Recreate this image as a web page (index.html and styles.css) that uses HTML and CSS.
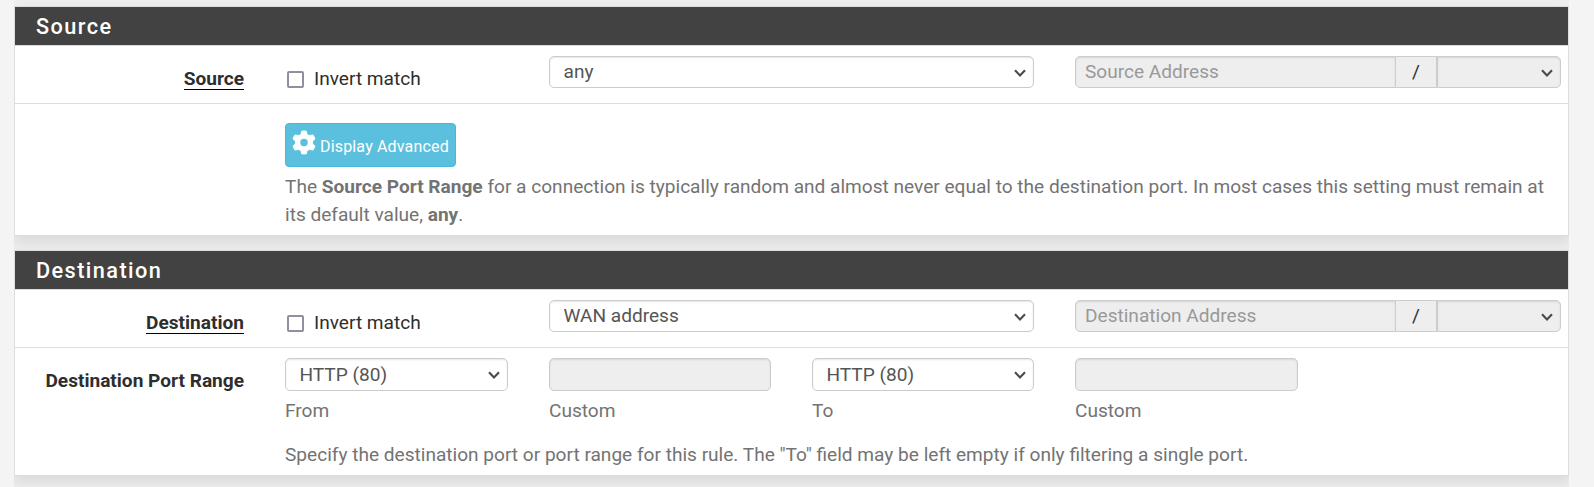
FILE: index.html
```html
<!DOCTYPE html>
<html lang="en">
<head>
<meta charset="utf-8">
<title>Firewall rule</title>
<link rel="stylesheet" href="styles.css">
</head>
<body>
<svg class="defs" aria-hidden="true">
  <symbol id="chevron" viewBox="0 0 12 8"><path d="M1 1.2 L6 6.4 L11 1.2" fill="none" stroke="#4a4a4a" stroke-width="2.1"/></symbol>
</svg>
<main class="container">
  <section class="panel">
    <h2 class="panel-heading">Source</h2>
    <div class="row row-address">
      <div class="label"><span class="underlined">Source</span></div>
      <label class="invert"><input type="checkbox" class="checkbox">Invert match</label>
      <div class="select wide"><span>any</span><svg class="arrow"><use href="#chevron"/></svg></div>
      <div class="group">
        <input class="control" type="text" placeholder="Source Address" disabled>
        <span class="addon">/</span>
        <div class="select disabled"><svg class="arrow"><use href="#chevron"/></svg></div>
      </div>
    </div>
    <div class="row row-advanced">
      <div class="full">
        <button class="button" type="button"><svg class="gear" viewBox="0 0 512 512"><path fill="#fff" d="M495.9 166.6c3.2 8.7 .5 18.4-6.4 24.6l-43.3 39.4c1.1 8.3 1.7 16.8 1.7 25.4s-.6 17.1-1.7 25.4l43.3 39.4c6.9 6.2 9.6 15.9 6.4 24.6c-4.4 11.9-9.7 23.3-15.8 34.3l-4.7 8.1c-6.6 11-14 21.4-22.1 31.2c-5.9 7.2-15.7 9.6-24.5 6.8l-55.7-17.7c-13.4 10.3-28.2 18.9-44 25.4l-12.5 57.1c-2 9.1-9 16.3-18.2 17.8c-13.8 2.3-28 3.5-42.5 3.5s-28.7-1.2-42.5-3.5c-9.2-1.5-16.2-8.7-18.2-17.8l-12.5-57.1c-15.8-6.5-30.6-15.1-44-25.4L83.1 425.9c-8.8 2.8-18.6 .3-24.5-6.8c-8.1-9.8-15.5-20.2-22.1-31.2l-4.7-8.1c-6.1-11-11.4-22.4-15.8-34.3c-3.2-8.7-.5-18.4 6.4-24.6l43.3-39.4C64.6 273.1 64 264.6 64 256s.6-17.1 1.7-25.4L22.4 191.2c-6.9-6.2-9.6-15.9-6.4-24.6c4.4-11.9 9.7-23.3 15.8-34.3l4.7-8.1c6.6-11 14-21.4 22.1-31.2c5.9-7.2 15.7-9.6 24.5-6.8l55.7 17.7c13.4-10.3 28.2-18.9 44-25.4l12.5-57.1c2-9.1 9-16.3 18.2-17.8C227.3 1.2 241.5 0 256 0s28.7 1.2 42.5 3.5c9.2 1.5 16.2 8.7 18.2 17.8l12.5 57.1c15.8 6.5 30.6 15.1 44 25.4l55.7-17.7c8.8-2.8 18.6-.3 24.5 6.8c8.1 9.8 15.5 20.2 22.1 31.2l4.7 8.1c6.1 11 11.4 22.4 15.8 34.3zM256 336a80 80 0 1 0 0-160 80 80 0 1 0 0 160z"/></svg><span class="button-text">Display Advanced</span></button>
        <p class="help">The <b>Source Port Range</b> for a connection is typically random and almost never equal to the destination port. In most cases this setting must remain at its default value, <b>any</b>.</p>
      </div>
    </div>
  </section>
  <section class="panel">
    <h2 class="panel-heading">Destination</h2>
    <div class="row row-address">
      <div class="label"><span class="underlined">Destination</span></div>
      <label class="invert"><input type="checkbox" class="checkbox">Invert match</label>
      <div class="select wide"><span>WAN address</span><svg class="arrow"><use href="#chevron"/></svg></div>
      <div class="group">
        <input class="control" type="text" placeholder="Destination Address" disabled>
        <span class="addon">/</span>
        <div class="select disabled"><svg class="arrow"><use href="#chevron"/></svg></div>
      </div>
    </div>
    <div class="row row-ports">
      <div class="label">Destination Port Range</div>
      <div class="port"><div class="select"><span>HTTP (80)</span><svg class="arrow"><use href="#chevron"/></svg></div><span class="caption">From</span></div>
      <div class="port"><input class="control" type="text" disabled><span class="caption">Custom</span></div>
      <div class="port"><div class="select"><span>HTTP (80)</span><svg class="arrow"><use href="#chevron"/></svg></div><span class="caption">To</span></div>
      <div class="port"><input class="control" type="text" disabled><span class="caption">Custom</span></div>
      <p class="help full">Specify the destination port or port range for this rule. The "To" field may be left empty if only filtering a single port.</p>
    </div>
  </section>
</main>
</body>
</html>
```
FILE: styles.css
```css
* { box-sizing: border-box; }
body {
  margin: 0;
  background: #f4f4f4;
  font-family: Roboto, sans-serif;
  font-size: 19.09px;
  line-height: 28px;
  color: #2e2e2e;
}
.defs { display: none; }
.container {
  width: 1555px;
  height: 487px;
  margin-left: 14px;
  padding-top: 6px;
  background: #eee;
  overflow: hidden;
  display: flex;
  flex-direction: column;
  gap: 14px;
}
.panel {
  height: 230px;
  flex: none;
  background: #fff;
  border: 1px solid #ddd;
  box-shadow: 0 6px 12px rgba(0, 0, 0, 0.09);
}
.panel + .panel { height: 226px; }
.panel-heading {
  margin: 0;
  height: 39px;
  padding-left: 21px;
  background: #424242;
  border-bottom: 1px solid #ddd;
  color: #fff;
  font-size: 21.7px;
  font-weight: 500;
  letter-spacing: 1.42px;
  line-height: 39px;
}
.row {
  display: grid;
  grid-template-columns: 229px 223px 222px 222px 223px 222px;
  column-gap: 41px;
}
.row-address { height: 58px; padding-top: 10px; border-bottom: 1px solid #ddd; }
.label { text-align: right; font-weight: 700; padding-top: 9px; }
.underlined { display: inline-block; line-height: 21px; border-bottom: 1px solid #000; }
.invert { display: flex; align-items: center; height: 28px; margin-top: 9px; padding-left: 2px; }
.checkbox {
  appearance: none;
  width: 17px;
  height: 17px;
  margin: 1px 10px 0 0;
  border: 2px solid #8f8f9d;
  border-radius: 2px;
  background: #fff;
}
.select, .control {
  display: block;
  position: relative;
  width: 100%;
  height: 32px;
  border: 1px solid #ccc;
  border-radius: 5px;
  background: #fff;
  box-shadow: inset 0 1px 2px rgba(0, 0, 0, 0.1);
  color: #555;
  font: inherit;
  line-height: 30px;
  padding: 0 13.5px;
}
.control { padding: 0 9px 1px; }
.control:disabled, .select.disabled { background: #eee; }
.control::placeholder { color: #999; }
.arrow { position: absolute; right: 7px; top: 12px; width: 12px; height: 8px; }
.wide { grid-column: span 2; }
.group { display: grid; grid-template-columns: 321px 41px 124px; width: 486px; height: 32px; }
.group .control { border-radius: 5px 0 0 5px; }
.group .select { border-radius: 0 5px 5px 0; }
.addon { background: #eee; border: solid #ccc; border-width: 1px 1px 1px 0; text-align: center; line-height: 30px; }
.full { grid-column: 2 / -1; }
.row-advanced .full { padding-top: 19px; }
.button {
  display: flex;
  width: 171px;
  height: 44px;
  padding: 6px;
  border: 1px solid #46b8da;
  border-radius: 4px;
  background: #5bc0de;
  color: #fff;
  font: 16px/34px Roboto, sans-serif;
  white-space: nowrap;
}
.gear { width: 24px; height: 25px; flex: none; }
.button-text { margin-left: 4px; letter-spacing: 0.17px; }
.help { margin: 0; color: #737373; }
.row-advanced .help { margin-top: 6px; }
.row-ports { padding-top: 10px; }
.row-ports .select, .row-ports .control { height: 33px; line-height: 31px; }
.caption { display: block; color: #737373; line-height: 40px; }
.row-ports .help { margin-top: 10px; }
```
